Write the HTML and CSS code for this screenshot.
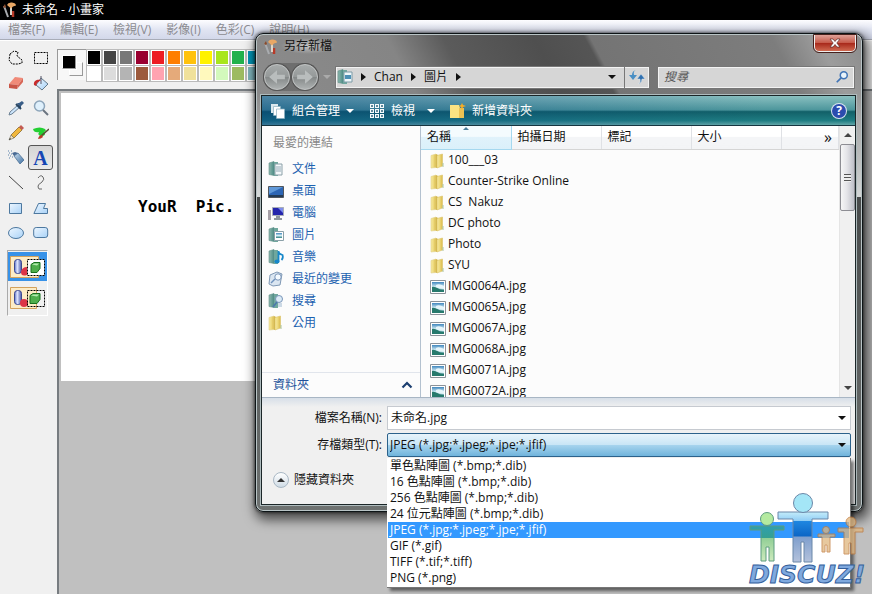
FILE: index.html
```html
<!DOCTYPE html>
<html lang="zh-Hant">
<head>
<meta charset="utf-8">
<title>未命名 - 小畫家</title>
<link rel="stylesheet" href="styles.css">
</head>
<body>
<svg class="defs" aria-hidden="true">
  <defs>
    <linearGradient id="gold" x1="0" x2="1" y1="0" y2="0"><stop offset="0" stop-color="#f6e9a0"/><stop offset=".45" stop-color="#efdc80"/><stop offset="1" stop-color="#d9b94a"/></linearGradient>
    <linearGradient id="sky" x1="0" x2="0" y1="0" y2="1"><stop offset="0" stop-color="#3f86bd"/><stop offset=".5" stop-color="#d5eef5"/><stop offset="1" stop-color="#287c80"/></linearGradient>
    <linearGradient id="pale" x1="0" x2="1" y1="0" y2="1"><stop offset="0" stop-color="#eef7ff"/><stop offset="1" stop-color="#a9d2f7"/></linearGradient>
    <linearGradient id="teal" x1="0" x2="1" y1="0" y2="0"><stop offset="0" stop-color="#8fb8ae"/><stop offset="1" stop-color="#4c8c86"/></linearGradient>
    <linearGradient id="cyl" x1="0" x2="1" y1="0" y2="0"><stop offset="0" stop-color="#5a70c8"/><stop offset=".4" stop-color="#dfe6ff"/><stop offset="1" stop-color="#4454a8"/></linearGradient>
    <linearGradient id="steel" x1="0" x2="1" y1="0" y2="1"><stop offset="0" stop-color="#c9def0"/><stop offset="1" stop-color="#3d6ea0"/></linearGradient>
  </defs>
  <symbol id="folder" viewBox="0 0 16 16"><path d="M1 2.500 6 1v13.500l-5 .5z" fill="url(#gold)" stroke="#e0d088" stroke-width=".6"/><path d="M6 1l2 1v12.500l-2 .5z" fill="#d2b548"/><path d="M7 2.500l5.500-1.500v12L7 15z" fill="url(#gold)" stroke="#dcc56c" stroke-width=".6"/><path d="M12.500 10h1v4h-1z" fill="#a9c4a0"/></symbol>
  <symbol id="photo" viewBox="0 0 16 14"><path d="M.5.5h15v13H.5z" fill="#fff" stroke="#8b9299"/><path d="M2 2h12v10H2z" fill="url(#sky)"/><path d="M2 7c4-1 6 3 12 3v2H2z" fill="#277a6d"/><path d="M6 5q3-2 8 1v3q-5 0-8-2z" fill="#e6f5fa"/></symbol>
  <symbol id="binder" viewBox="0 0 16 16"><path d="M1 2l5-1.500v14L1 13.500z" fill="url(#teal)" stroke="#5f8f88" stroke-width=".6"/><path d="M6 1h4v14H6z" fill="#6fa79d"/></symbol>
  <symbol id="brushes" viewBox="0 0 14 16"><path d="M2 4l4 11" stroke="#a9acb0" stroke-width="2"/><path d="M1 5l2-3 1 3-1 1z" fill="#8a4b2c"/><path d="M11 9v6" stroke="#b83a28" stroke-width="2.500"/><path d="M9 5v8" stroke="#ddd6cb" stroke-width="2"/><path d="M5 3q1-3 5-2.500t4 3l-3 1-2 2z" fill="#e8a765"/></symbol>
</svg>

<div class="paint">
  <header class="titlebar"><svg class="brush-icon"><use href="#brushes"/></svg><h1>未命名 - 小畫家</h1></header>
  <nav class="menubar">
    <button>檔案(F)</button><button>編輯(E)</button><button>檢視(V)</button><button>影像(I)</button><button>色彩(C)</button><button>說明(H)</button>
  </nav>
  <div class="workspace">
    <aside class="toolbox">
      <div class="tools">
        <button aria-label="任意範圍"><svg viewBox="0 0 16 16"><path d="M2 4l4-3 4 1-1 4 5 4v3l-4 1H4L1 10z" fill="none" stroke="#000" stroke-dasharray="2 1"/></svg></button>
        <button aria-label="選取"><svg viewBox="0 0 16 16"><path d="M1.500 2.500h13v11h-13z" fill="none" stroke="#000" stroke-dasharray="2 1"/></svg></button>
        <button aria-label="橡皮擦"><svg viewBox="0 0 16 16"><path d="M1 9l6-7 8 1-5 7z" fill="#f08a78"/><path d="M1 9l9 1-1 4-8-1z" fill="#c95547"/><path d="M10 10l5-7v4l-6 7z" fill="#d86757"/></svg></button>
        <button aria-label="填色"><svg viewBox="0 0 16 16"><path d="M8 3l7 6-6 6-6-5z" fill="url(#pale)" stroke="#63798a"/><path d="M8 9V1" stroke="#556"/><path d="M1 10c-1-5 4-6 7-5L4 8 3 11z" fill="#c92c2c"/></svg></button>
        <button aria-label="挑選色彩"><svg viewBox="0 0 16 16"><path d="M10 5l2 2-8 7-3 1 1-3z" fill="url(#pale)" stroke="#6d8194"/><path d="M9 3l2 0 3-2 2 2-3 3v3z" fill="#395d87"/><path d="M8 4l5 5" stroke="#284460" stroke-width="2"/></svg></button>
        <button aria-label="放大鏡"><svg viewBox="0 0 16 16"><circle cx="6.500" cy="6" r="5" fill="#dff0fc" stroke="#8da5ba" stroke-width="1.500"/><path d="M10 10l5 5" stroke="#6b7480" stroke-width="2"/></svg></button>
        <button aria-label="鉛筆"><svg viewBox="0 0 16 16"><path d="M3 10l8-8 3 3-8 8z" fill="#f1b73d" stroke="#7a5b22" stroke-width=".7"/><path d="M3 10l3 3-5 2z" fill="#f2dfbf" stroke="#665" stroke-width=".6"/><path d="M11 2l2-2 3 3-2 2z" fill="#c45b52"/><path d="M1 15l1-2 1 1z" fill="#222"/></svg></button>
        <button aria-label="粉刷"><svg viewBox="0 0 16 16"><path d="M0 4q7-3 12 0 2 2-1 3 3 4-3 4-4-1-2-4-5 1-6-3z" fill="#24cf32"/><path d="M8 11l8-7" stroke="#594832" stroke-width="1.500"/><path d="M5 14q1-4 4-4l1 2q-2 2-5 2z" fill="#b83a28"/></svg></button>
        <button aria-label="噴槍"><svg viewBox="0 0 16 16"><path d="M6 6l4-3 6 7-4 4z" fill="url(#steel)" stroke="#40658c" stroke-width=".7"/><path d="M4 3l3-1 3 1-4 3z" fill="#486a94"/><path d="M0 1h1M3 1h1M1 3h1M3 4h1M0 5h1M2 6h1M4 7h1M1 8h1" stroke="#5b80a8"/></svg></button>
        <button class="active" aria-label="文字" aria-pressed="true"><span class="letter-a">A</span></button>
        <button aria-label="直線"><svg viewBox="0 0 16 16"><path d="M1 1l14 13" stroke="#444" fill="none"/></svg></button>
        <button aria-label="曲線"><svg viewBox="0 0 16 16"><path d="M5 3q3-4 5-1 2 2-1 5-5 3-4 5 0 3 4 2" stroke="#666" fill="none"/></svg></button>
        <button aria-label="矩形"><svg viewBox="0 0 16 16"><path d="M1.500 3.500h12v10h-12z" fill="url(#pale)" stroke="#4d789f"/></svg></button>
        <button aria-label="多邊形"><svg viewBox="0 0 16 16"><path d="M5.500 3.500h7l-2 5h4v5H.9z" fill="url(#pale)" stroke="#4d789f"/></svg></button>
        <button aria-label="橢圓"><svg viewBox="0 0 16 16"><ellipse cx="8" cy="8" rx="7.500" ry="5.500" fill="url(#pale)" stroke="#4d789f"/></svg></button>
        <button aria-label="圓角矩形"><svg viewBox="0 0 16 16"><rect x=".7" y="2.500" width="14" height="10" rx="2.500" fill="url(#pale)" stroke="#4d789f"/></svg></button>
      </div>
      <div class="modes">
        <button class="active" aria-label="不透明"><svg viewBox="0 0 36 24"><path d="M.5 1.500h28v21H.5z" fill="#fdecc6" stroke="#d4a25c"/><path d="M17.500 4.500h17v16h-17z" fill="#fff" stroke="#000" stroke-dasharray="2 1"/><rect x="4.500" y="4.500" width="7" height="14" rx="3" fill="url(#cyl)" stroke="#3c4890"/><path d="M17 12v8q-6 2-6-3 1-5 6-5z" fill="#dc3446"/><path d="M21 9.500l3-2h6v6l-3 4h-6z" fill="#4fae4c" stroke="#17711d"/><path d="M22 9.500l2-1h5l-2 2z" fill="#b4ecae"/></svg></button>
        <button aria-label="透明"><svg viewBox="0 0 36 24"><path d="M.5 1.500h26v21H.5z" fill="#fdecc6" stroke="#d4a25c"/><rect x="4.500" y="4.500" width="7" height="14" rx="3" fill="url(#cyl)" stroke="#3c4890"/><circle cx="14" cy="17" r="4" fill="#dc3446"/><path d="M17.500 4.500h17v16h-17z" fill="none" stroke="#000" stroke-dasharray="2 1"/><path d="M20 9.500l3-2h7v6l-3 4h-7z" fill="#4fae4c" stroke="#17711d"/><path d="M21 9.500l2-1h6l-2 2z" fill="#b4ecae"/></svg></button>
      </div>
    </aside>
    <main class="drawing">
      <div class="palette">
        <div class="current"><i class="back"></i><i class="fore"></i></div>
        <div class="swatches">
          <button class="c1" aria-label="黑色"></button><button class="c2" aria-label="深灰"></button><button class="c3" aria-label="灰色"></button><button class="c4" aria-label="暗紅"></button><button class="c5" aria-label="紅色"></button><button class="c6" aria-label="橙色"></button><button class="c7" aria-label="金色"></button><button class="c8" aria-label="黃色"></button><button class="c9" aria-label="萊姆"></button><button class="c10" aria-label="綠色"></button><button class="c11" aria-label="青色"></button>
          <button class="d1" aria-label="白色"></button><button class="d2" aria-label="淺灰"></button><button class="d3" aria-label="銀灰"></button><button class="d4" aria-label="棕色"></button><button class="d5" aria-label="粉紅"></button><button class="d6" aria-label="膚色"></button><button class="d7" aria-label="米色"></button><button class="d8" aria-label="淡黃"></button><button class="d9" aria-label="淡綠"></button><button class="d10" aria-label="橄欖"></button><button class="d11" aria-label="淡青"></button>
        </div>
      </div>
      <div class="desk"><div class="canvas"><p>YouR&nbsp; Pic.</p></div></div>
    </main>
  </div>
</div>

<section class="dialog" role="dialog" aria-labelledby="dlg-title">
  <header class="dlg-title">
    <svg class="brush-icon"><use href="#brushes"/></svg><h2 id="dlg-title">另存新檔</h2>
    <button class="close" aria-label="關閉"><svg viewBox="0 0 12 10"><path d="M1 1h3l2 2.500L8 1h3L7.800 5 11 9H8L6 6.500 4 9H1l3.200-4z" fill="#fff" stroke="#5a2a26" stroke-width=".7"/></svg></button>
  </header>
  <div class="nav-row">
    <div class="travel">
      <button aria-label="上一頁"><svg viewBox="0 0 16 16"><path d="M1 8l7-6v4h7v4H8v4z" fill="#b9bdbd"/></svg></button>
      <button aria-label="下一頁"><svg viewBox="0 0 16 16"><path d="M15 8L8 2v4H1v4h7v4z" fill="#b9bdbd"/></svg></button>
    </div>
    <span class="tri light"></span>
    <div class="address">
      <svg class="i16"><use href="#binder"/><path d="M7 3h8v10H7z" fill="#eef7fa" stroke="#7c9aa6"/><path d="M8 6h6v4H8z" fill="#4d90b5"/></svg>
      <span class="tri side"></span><button>Chan</button><span class="tri side"></span><button>圖片</button><span class="tri side"></span>
      <span class="tri end"></span>
      <button class="refresh" aria-label="重新整理"><svg viewBox="0 0 16 16"><path d="M7 1q-3 1-2 5h3l-4 5-4-5h3q0-4 4-5z" fill="#4a8fc4"/><path d="M9 15q3-1 2-5H8l4-5 4 5h-3q0 4-4 5z" fill="#2f70b0" stroke="#dfe6ea" stroke-width=".5"/></svg></button>
    </div>
    <label class="search"><input type="text" placeholder="搜尋" aria-label="搜尋"><svg viewBox="0 0 16 16"><circle cx="10" cy="6" r="4" fill="#e9f3fa" stroke="#3f73b5" stroke-width="1.700"/><path d="M7 9l-5 5" stroke="#3f73b5" stroke-width="2"/></svg></label>
  </div>
  <div class="client">
    <div class="commands">
      <button><svg class="i16" viewBox="0 0 16 16"><path d="M1 1h7v9H1z" fill="#dbe8ee"/><path d="M3.500 3.500h7v9h-7z" fill="#fff" stroke="#8bb0c0" stroke-width=".7"/><path d="M6.500 6h8v9.500h-8z" fill="#fff" stroke="#8bb0c0" stroke-width=".7"/></svg>組合管理<span class="tri white"></span></button>
      <button class="view"><svg class="i16" viewBox="0 0 16 16"><path d="M1 1h4v4H1zM6 1h4v4H6zM11 1h4v4h-4zM1 6h4v4H1zM6 6h4v4H6zM11 6h4v4h-4zM1 11h4v4H1zM6 11h4v4H6zM11 11h4v4h-4z" fill="#f4fafc"/><path d="M2 2h2v2H2zM7 2h2v2H7zM12 2h2v2h-2zM2 7h2v2H2zM7 7h2v2H7zM12 7h2v2h-2zM2 12h2v2H2zM7 12h2v2H7zM12 12h2v2h-2z" fill="#61899c"/></svg>檢視<span class="tri white"></span></button>
      <button><svg class="i16" viewBox="0 0 16 16"><path d="M0 2h9l1 3h4v10H0z" fill="#fbe382"/><path d="M9 5h5v10H9z" fill="#edc253"/><path d="M12 0l1 2 3 1-3 1-1 3-1-3-2-1 2-1z" fill="#f8ad25"/></svg>新增資料夾</button>
      <button class="help" aria-label="說明">?</button>
    </div>
    <div class="browser">
      <nav class="places">
        <h3>最愛的連結</h3>
        <ul>
          <li><a href="#"><svg class="i16"><use href="#binder"/><path d="M7 3h7v11H7z" fill="#f4f8fa" stroke="#8ba0a8"/><path d="M8 6h5M8 8h5M8 10h5" stroke="#93a9b5"/></svg>文件</a></li>
          <li><a href="#"><svg class="i16" viewBox="0 0 16 16"><path d="M.5 3.500h15v11H.5z" fill="#2c65b4" stroke="#51565c"/><path d="M1 4h14L3 10l-2 1z" fill="#5f98d8"/><path d="M1 13h14" stroke="#223a55" stroke-width="2"/></svg>桌面</a></li>
          <li><a href="#"><svg class="i16" viewBox="0 0 16 16"><path d="M0 5h3v10H0z" fill="#a7a1a8"/><path d="M4.500 2.500h11v8h-11z" fill="#2525ac" stroke="#a8adb8"/><path d="M10 3h5v5z" fill="#7e8ded"/><path d="M8 11h4v2h2v2H6v-2h2z" fill="#8f969e"/></svg>電腦</a></li>
          <li><a href="#"><svg class="i16"><use href="#binder"/><path d="M6.500 4.500h9v9h-9z" fill="#fff" stroke="#8ba0a8"/><path d="M8 6h6v5H8z" fill="url(#sky)"/></svg>圖片</a></li>
          <li><a href="#"><svg class="i16"><use href="#binder"/><path d="M10.500 12V2q0 3 4 4 1 3-1 5" stroke="#1687c9" stroke-width="1.800" fill="none"/><ellipse cx="9" cy="12.500" rx="2.600" ry="2" fill="#1687c9"/></svg>音樂</a></li>
          <li><a href="#"><svg class="i16" viewBox="0 0 16 16"><path d="M2 4l7-3 5 2-2 11-7 1-4-2z" fill="#dbe6f1" stroke="#7f98b4"/><circle cx="10" cy="6" r="3.200" fill="#f4faff" stroke="#7995b8"/><path d="M7 8l-4 4" stroke="#6f91bd" stroke-width="1.500"/></svg>最近的變更</a></li>
          <li><a href="#"><svg class="i16"><use href="#binder"/><circle cx="11" cy="6" r="3.500" fill="#dbeaf6" stroke="#7995b8"/><path d="M9 9l-4 5" stroke="#4d78ad" stroke-width="1.700"/><path d="M10 10h4v4h-4z" fill="#ccd9e5"/></svg>搜尋</a></li>
          <li><a href="#"><svg class="i16"><use href="#folder"/></svg>公用</a></li>
        </ul>
        <button class="folders">資料夾<svg viewBox="0 0 12 8"><path d="M1.500 6.500L6 2l4.500 4.500" fill="none" stroke="#1c3f70" stroke-width="2.200"/></svg></button>
      </nav>
      <div class="files">
        <table>
          <thead><tr><th class="sorted">名稱</th><th>拍攝日期</th><th>標記</th><th>大小</th><th class="more">»</th></tr></thead>
          <tbody>
            <tr><td colspan="5"><svg class="i16"><use href="#folder"/></svg>100___03</td></tr>
            <tr><td colspan="5"><svg class="i16"><use href="#folder"/></svg>Counter-Strike Online</td></tr>
            <tr><td colspan="5"><svg class="i16"><use href="#folder"/></svg>CS&nbsp; Nakuz</td></tr>
            <tr><td colspan="5"><svg class="i16"><use href="#folder"/></svg>DC photo</td></tr>
            <tr><td colspan="5"><svg class="i16"><use href="#folder"/></svg>Photo</td></tr>
            <tr><td colspan="5"><svg class="i16"><use href="#folder"/></svg>SYU</td></tr>
            <tr><td colspan="5"><svg class="i16"><use href="#photo"/></svg>IMG0064A.jpg</td></tr>
            <tr><td colspan="5"><svg class="i16"><use href="#photo"/></svg>IMG0065A.jpg</td></tr>
            <tr><td colspan="5"><svg class="i16"><use href="#photo"/></svg>IMG0067A.jpg</td></tr>
            <tr><td colspan="5"><svg class="i16"><use href="#photo"/></svg>IMG0068A.jpg</td></tr>
            <tr><td colspan="5"><svg class="i16"><use href="#photo"/></svg>IMG0071A.jpg</td></tr>
            <tr><td colspan="5"><svg class="i16"><use href="#photo"/></svg>IMG0072A.jpg</td></tr>
          </tbody>
        </table>
      </div>
      <div class="scrollbar"><span class="step up"></span><span class="thumb"><i></i></span><span class="step down"></span></div>
    </div>
    <form class="save">
      <label for="fname">檔案名稱(N):</label>
      <div class="field"><input id="fname" type="text" value="未命名.jpg"><span class="tri"></span></div>
      <label for="ftype">存檔類型(T):</label>
      <div class="field type"><select id="ftype"><option>JPEG (*.jpg;*.jpeg;*.jpe;*.jfif)</option></select><span class="tri"></span>
        <ul class="options" role="listbox" aria-label="存檔類型">
          <li role="option">單色點陣圖 (*.bmp;*.dib)</li>
          <li role="option">16 色點陣圖 (*.bmp;*.dib)</li>
          <li role="option">256 色點陣圖 (*.bmp;*.dib)</li>
          <li role="option">24 位元點陣圖 (*.bmp;*.dib)</li>
          <li role="option" class="picked" aria-selected="true">JPEG (*.jpg;*.jpeg;*.jpe;*.jfif)</li>
          <li role="option">GIF (*.gif)</li>
          <li role="option">TIFF (*.tif;*.tiff)</li>
          <li role="option">PNG (*.png)</li>
        </ul>
      </div>
      <button type="button" class="hide"><span class="round"><i></i></span>隱藏資料夾</button>
    </form>
  </div>
</section>

<svg class="watermark" viewBox="0 0 124 98" role="img" aria-label="Discuz!">
  <defs>
    <linearGradient id="wb" x1="0" x2="0" y1="0" y2="1"><stop offset="0" stop-color="#c4ecfa"/><stop offset=".18" stop-color="#8fcdf5"/><stop offset=".19" stop-color="#1f86e0"/><stop offset=".48" stop-color="#0c66c6"/><stop offset=".5" stop-color="#7f9fcd"/><stop offset="1" stop-color="#b4c2dc"/></linearGradient>
    <linearGradient id="wg" x1="0" x2="0" y1="0" y2="1"><stop offset="0" stop-color="#2f9fae"/><stop offset=".33" stop-color="#35a092"/><stop offset=".35" stop-color="#92cf96"/><stop offset="1" stop-color="#cdeabd"/></linearGradient>
  </defs>
  <g fill="url(#wb)" stroke="#6b87a8"><path d="M30 21h50v7H64v43H56V51h-3v20h-8V28H30z"/><circle cx="55" cy="12" r="9.500" fill="#a4e6f7"/></g>
  <g fill="url(#wg)" stroke="#5d9c80"><path d="M2 35h34v4H26v31h-5V56h-3v14h-5V39H2z"/><circle cx="19" cy="28" r="6.500" fill="#b4eaa0"/></g>
  <g fill="#e0b67e" stroke="#c07838" opacity=".75"><path d="M70 43h17v3h-5v15h-3v-7h-2v7h-3V46h-4z"/><circle cx="78" cy="39" r="3.500"/><path d="M90 37h25v4h-8v22h-4V52h-2v11h-5V41h-6z"/><circle cx="103" cy="31" r="5"/></g>
  <text x="1" y="92" class="wm-text">DISCUZ!</text>
</svg>
</body>
</html>
```

FILE: styles.css
```css
* { box-sizing: border-box; }
body { margin: 0; min-height: 100vh; overflow: hidden; font: 12px/16px "Open Sans", "Noto Sans CJK TC", sans-serif; color: #111; }
button { border: 0; padding: 0; margin: 0; background: none; font: inherit; color: inherit; }
h1, h2, h3, p, ul { margin: 0; padding: 0; font: inherit; list-style: none; }
i { display: block; }
svg { display: block; flex: none; }
.defs { position: absolute; width: 0; height: 0; }
.i16 { width: 16px; height: 16px; }
.brush-icon { width: 14px; height: 16px; }
.tri { border: 4px solid transparent; border-top-color: #111; border-bottom: 0; flex: none; }
.tri.light { border-top-color: #aaa; }
.tri.white { border-top-color: #fff; }
.tri.side { border: 4px solid transparent; border-left: 5px solid #111; border-right: 0; }

/* Paint window */
.paint { display: flex; flex-direction: column; min-height: 100vh; background: #f0f0f0; }
.titlebar { display: flex; align-items: center; gap: 6px; height: 20px; padding: 0 2px; background: #000; color: #fff; }
.menubar { display: flex; gap: 15px; height: 20px; padding: 0 8px; background: linear-gradient(#fdfdff, #dfe3f1 55%, #d3d8ea); border-bottom: 1px solid #a8acb8; color: #8b8b90; }
.workspace { display: flex; flex: 1; border-top: 1px solid #fff; }
.toolbox { width: 57px; padding: 4px 3px; }
.tools { display: grid; grid-template-columns: 25px 25px; grid-auto-rows: 25px; }
.tools button { display: grid; place-items: center; }
.tools svg { width: 16px; height: 16px; }
.tools .active { border: 1px solid #555; border-radius: 3px; background: linear-gradient(#d5d5d5, #e9e9e9); }
.letter-a { font: bold 20px/20px "Liberation Serif", serif; color: #1546b4; }
.modes { width: 41px; margin: 5px 4px; border: 1px solid #aaa; border-color: #aaa #fff #fff #aaa; padding: 1px 0; }
.modes button { display: grid; place-items: center; width: 100%; height: 33px; }
.modes .active { background: #3892e8; height: 29px; }
.modes svg { width: 36px; height: 24px; }
.drawing { flex: 1; display: flex; flex-direction: column; min-width: 0; }
.palette { display: flex; height: 48px; padding: 8px 0 9px; }
.current { display: grid; width: 30px; background: #f7f7f7; border-top: 1px solid #999; border-left: 1px solid #999; padding: 5px 4px; }
.current i { grid-area: 1 / 1; width: 14px; height: 14px; border: 1px solid #888; border-color: #fff #999 #999 #fff; }
.current .back { margin: 7px; }
.current .fore { background: #000; box-shadow: 1px 1px 0 #fff; }
.swatches { display: grid; grid-template: 15px 15px / repeat(11, 14px); gap: 1px 2px; background: #fff; border-top: 1px solid #aaa; }
.swatches button { border: 1px solid #fff; outline: 1px solid #bbb; outline-offset: 0; }
.c1 { background: #000; } .c2 { background: #464646; } .c3 { background: #787878; } .c4 { background: #990030; } .c5 { background: #ed1c24; } .c6 { background: #ff7e00; } .c7 { background: #ffc20e; } .c8 { background: #fff200; } .c9 { background: #a8e61d; } .c10 { background: #22b14c; } .c11 { background: #0095b5; }
.d1 { background: #fff; } .d2 { background: #dcdcdc; } .d3 { background: #b4b4b4; } .d4 { background: #9c5a3c; } .d5 { background: #ffa3b1; } .d6 { background: #e5aa7a; } .d7 { background: #f0e19c; } .d8 { background: #fff9bd; } .d9 { background: #d3f9bc; } .d10 { background: #9dbb61; } .d11 { background: #80b5bd; }
.desk { flex: 1; background: #c0c0c0; border: 2px solid #777c80; border-right: 0; border-bottom: 0; padding: 2px; }
.canvas { width: 70%; height: 288px; background: #fff; padding: 104px 77px; }
.canvas p { font: bold 16px/20px "DejaVu Sans Mono", monospace; color: #000; white-space: nowrap; }

/* Save dialog */
.dialog {
  position: absolute; left: 255px; right: 9px; top: 33px;
  border: 1px solid #0d1416; border-radius: 8px; padding: 1px 6px 6px 5px;
  box-shadow: inset 0 0 0 1px #b9c4c6, 0 0 3px 1px rgba(0,0,0,.5), 3px 5px 12px 3px rgba(0,0,0,.6);
  background:
    linear-gradient(rgba(255,255,255,0) 60px, rgba(240,244,244,.75) 163px) 0 0 / 100% 163px no-repeat,
    linear-gradient(62deg, #8d8d8d 0, #858585 190px, #5b5b5b 240px, #4f4f4f 320px, #555 365px, #747474 370px, #7d7d7d 530px, #9c9c9c 570px, #8b8b8b) 0 0 / 100% 163px no-repeat,
    linear-gradient(#484b4b 163px, #6e7271);
}
.dlg-title { display: flex; align-items: flex-start; height: 26px; gap: 4px; padding-left: 2px; }
.dlg-title .brush-icon { margin-top: 4px; }
.dlg-title h2 { margin-top: 3px; padding: 0 3px; background: radial-gradient(closest-side, rgba(255,255,255,.5), rgba(255,255,255,0)); }
.close { width: 42px; height: 17px; margin-left: auto; display: grid; place-items: center; border: 1px solid #eee; border-top: 0; border-radius: 0 0 5px 5px; outline: 1px solid #47201c; background: linear-gradient(#dfa198, #c65b4b 48%, #a8291b 52%, #cf6a51); }
.close svg { width: 12px; height: 10px; }
.nav-row { display: flex; align-items: center; height: 32px; gap: 4px; margin-right: 1px; }
.travel { display: flex; gap: 2px; margin-left: 2px; padding: 1px; border-radius: 14px; background: rgba(60,60,60,.35); }
.travel button { width: 26px; height: 26px; display: grid; place-items: center; border: 1px solid #c2c5c5; border-radius: 50%; background: linear-gradient(#a7abab, #959999 50%, #858989 52%, #aeb2b2); box-shadow: 0 0 0 1px #555; }
.travel svg { width: 18px; height: 18px; }
.address, .search { display: flex; align-items: center; height: 23px; border: 1px solid #777; box-shadow: inset 0 0 0 1px #f3f3f3; background: #d6d6d6; }
.address { flex: 1; gap: 8px; padding-left: 1px; min-width: 0; }
.address .end { margin-left: auto; }
.refresh { width: 25px; height: 100%; display: grid; place-items: center; border-left: 1px solid #777; }
.refresh svg { width: 16px; height: 16px; }
.search { width: 198px; margin-left: 3px; padding: 0 5px; }
.search input { flex: 1; min-width: 0; border: 0; padding: 0 1px; background: none; font: italic 12px/16px "Open Sans", "Noto Sans CJK TC", sans-serif; }
.search input::placeholder { color: #555; opacity: 1; }
.search svg { width: 14px; height: 14px; }
.client { border: 1px solid #1b2628; outline: 1px solid #aebbbd; margin-top: 2px; background: #f0f0f0; }
.commands { display: flex; align-items: center; gap: 15px; height: 30px; padding: 0 9px 0 8px; color: #fff; border-bottom: 1px solid #163540; background: linear-gradient(to right, rgba(0,60,130,.45), rgba(0,60,130,0) 85%), linear-gradient(#8ac0c0, #4c969c 48%, #126068 54%, #1f7d82 85%, #62a6a8); }
.commands button { display: flex; align-items: center; gap: 6px; }
.commands .view .tri { margin-left: 6px; }
.commands .help { margin-left: auto; width: 14px; height: 14px; justify-content: center; border-radius: 50%; background: #2b4cae; box-shadow: 0 0 0 1px #d9e4f1; font-weight: bold; }
.browser { display: flex; height: 272px; background: #fcfcfc; border-bottom: 1px solid #a8b6c4; }
.places { display: flex; flex-direction: column; width: 159px; border-right: 1px solid #b3c1cf; }
.places h3 { padding: 9px 11px 7px; color: #888; }
.places a { display: flex; align-items: center; gap: 8px; height: 22px; padding-left: 6px; color: #1c62b0; text-decoration: none; }
.folders { display: flex; justify-content: space-between; align-items: center; height: 25px; margin-top: auto; padding: 0 7px 0 11px; border-top: 1px solid #e1e5ec; color: #23529a; }
.folders svg { width: 12px; height: 8px; }
.files { flex: 1; overflow: hidden; min-width: 0; }
.files table { width: 100%; border-collapse: collapse; table-layout: fixed; }
.files th { position: relative; width: 90px; height: 23px; padding: 0 6px; text-align: left; font-weight: normal; border-right: 1px solid #dfe1e5; border-bottom: 1px solid #d5d5d5; background: linear-gradient(#fff 45%, #f4f5f7 50%, #f3f4f6); }
.files th.more { width: auto; text-align: right; font-size: 16px; }
.files th.sorted { background: linear-gradient(#f4fbfe 45%, #e0f2fb 50%, #daf0fa); border-color: #a5d8ef; }
.sorted::before { content: ""; position: absolute; top: 1px; left: 42px; border: 3px solid transparent; border-bottom-color: #4a7d99; border-top: 0; }
.files td { height: 21px; padding: 2px 0 0 9px; white-space: nowrap; }
.files td svg { display: inline-block; vertical-align: middle; margin-right: 2px; }
.scrollbar { display: flex; flex-direction: column; width: 16px; background: #f0f0f0; border-left: 1px solid #e5e5e5; }
.step { height: 18px; display: grid; place-items: center; }
.step::before { content: ""; border: 4px solid transparent; border-bottom-color: #444; border-top: 0; }
.step.down { margin-top: auto; }
.step.down::before { border: 4px solid transparent; border-top-color: #444; border-bottom: 0; }
.thumb { display: grid; place-items: center; height: 67px; border: 1px solid #8d8d93; border-radius: 2px; background: linear-gradient(to right, #f6f6f6, #e4e4e8 45%, #bfc0c8); }
.thumb i { width: 7px; height: 8px; background: repeating-linear-gradient(#555 0 1px, #eee 1px 3px); }
.save { display: grid; grid-template-columns: 120px 1fr; gap: 3px 5px; align-items: center; padding: 8px 4px 16px 0; background: linear-gradient(#d7dfe8, #f0f0f0 9px); }
.save label { text-align: right; }
.field { position: relative; display: flex; align-items: center; height: 24px; background: #fff; border: 1px solid #c6cad0; padding-right: 4px; }
.field input, .field select { flex: 1; min-width: 0; appearance: none; border: 0; outline: 0; padding: 0 3px; background: none; font: inherit; color: inherit; }
.field.type { border: 1px solid #2c628b; border-radius: 2px; background: linear-gradient(#e8f4fb, #c9e6f6 48%, #a5d3ed 52%, #70b4dc); }
.field select { padding: 0 2px; }
.options { position: absolute; left: -1px; right: -1px; top: 24px; padding: 0 1px 1px; border: 1px solid #777; border-width: 0 1px 1px 0; background: #fff; box-shadow: 3px 3px 3px rgba(0,0,0,.5); }
.options li { height: 16px; padding: 0 2px; white-space: nowrap; }
.options .picked { background: #3399ff; color: #fff; }
.hide { grid-column: 1; display: flex; align-items: center; gap: 5px; margin: 12px 0 0 11px; white-space: nowrap; }
.round { display: grid; place-items: center; width: 16px; height: 16px; border: 1px solid #a9b8c5; border-radius: 50%; background: linear-gradient(#fff, #cfdbe5); }
.round i { border: 4px solid transparent; border-bottom-color: #333; border-top: 0; }

.watermark { position: absolute; right: 0; bottom: 5px; width: 124px; height: 98px; z-index: 2; }
.wm-text { font: italic bold 25px "DejaVu Sans", sans-serif; fill: #7fa9de; stroke: #345f9c; stroke-width: 1px; }
```
